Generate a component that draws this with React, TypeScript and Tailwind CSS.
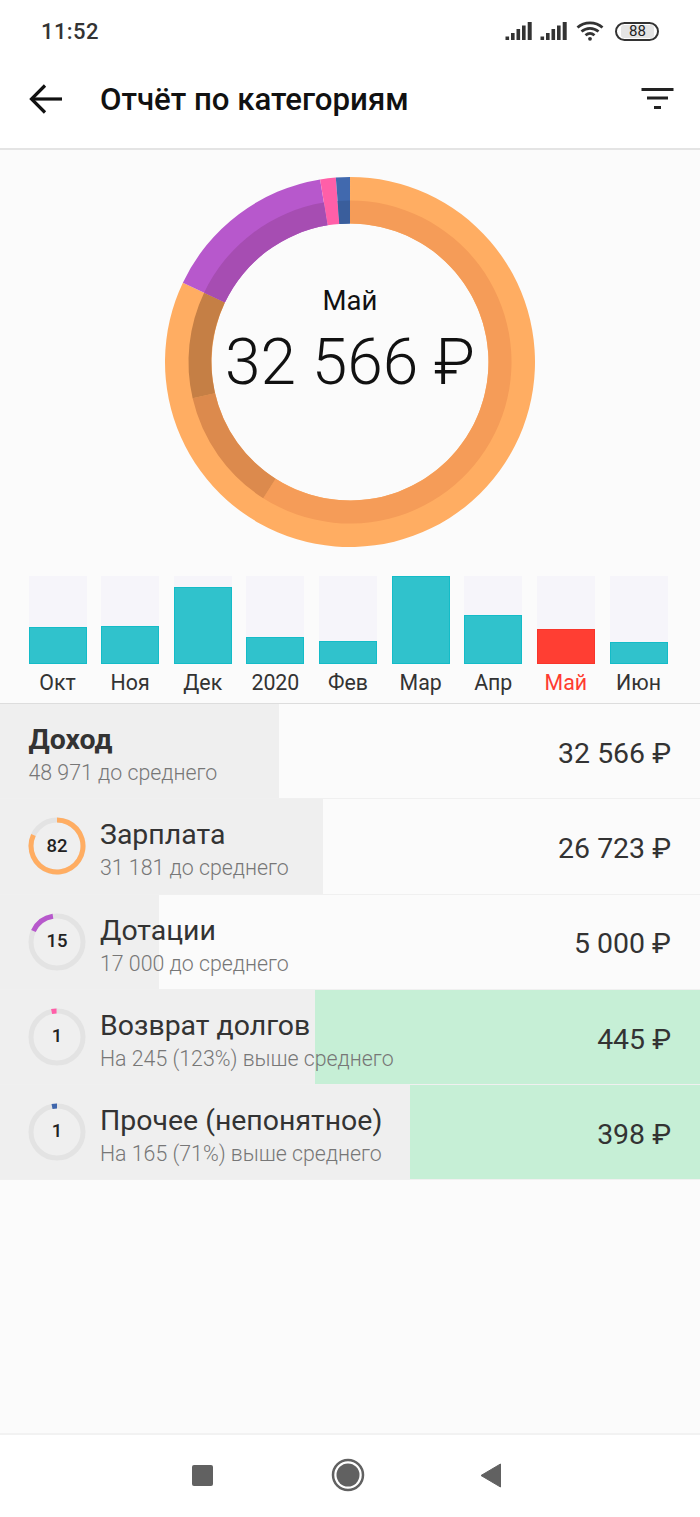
import React from "react";

function pt(cx: number, cy: number, r: number, a: number): [number, number] {
  const t = (a * Math.PI) / 180;
  return [cx + r * Math.sin(t), cy - r * Math.cos(t)];
}
function arc(cx: number, cy: number, r0: number, r1: number, a0: number, a1: number) {
  const large = a1 - a0 > 180 ? 1 : 0;
  const [x0, y0] = pt(cx, cy, r1, a0);
  const [x1, y1] = pt(cx, cy, r1, a1);
  const [x2, y2] = pt(cx, cy, r0, a1);
  const [x3, y3] = pt(cx, cy, r0, a0);
  return `M${x0} ${y0}A${r1} ${r1} 0 ${large} 1 ${x1} ${y1}L${x2} ${y2}A${r0} ${r0} 0 ${large} 0 ${x3} ${y3}Z`;
}

const months = [
  { l: "Окт", h: 37 },
  { l: "Ноя", h: 37.7 },
  { l: "Дек", h: 77 },
  { l: "2020", h: 26.7 },
  { l: "Фев", h: 23 },
  { l: "Мар", h: 87.2 },
  { l: "Апр", h: 48.7 },
  { l: "Май", h: 34.7, red: true },
  { l: "Июн", h: 21.7 },
];

const rows = [
  { title: "Зарплата", sub: "31 181 до среднего", amt: "26 723 ₽", w: 323, num: "82", arc: [[0, 295, "#FFAD62"]] },
  { title: "Дотации", sub: "17 000 до среднего", amt: "5 000 ₽", w: 159, num: "15", arc: [[295, 351, "#B758CC"]] },
  { title: "Возврат долгов", sub: "На 245 (123%) выше среднего", amt: "445 ₽", w: 315, green: true, num: "1", arc: [[348, 359, "#FF5FA8"]] },
  { title: "Прочее (непонятное)", sub: "На 165 (71%) выше среднего", amt: "398 ₽", w: 410, green: true, num: "1", arc: [[349, 360, "#3F66AC"]] },
] as { title: string; sub: string; amt: string; w: number; green?: boolean; num: string; arc: [number, number, string][] }[];

function Donut() {
  const c = 185;
  return (
    <svg width="370" height="370" viewBox="0 0 370 370" className="[grid-area:1/1]">
      <path d={arc(c, c, 138.5, 185, 0.01, 295.4)} fill="#FFAD62" />
      <path d={arc(c, c, 138.5, 185, 295.4, 350.7)} fill="#B758CC" />
      <path d={arc(c, c, 138.5, 185, 350.7, 355.6)} fill="#FF5FA8" />
      <path d={arc(c, c, 138.5, 185, 355.6, 360)} fill="#4169AE" />
      <path d={arc(c, c, 138.5, 161.5, 0.01, 212.5)} fill="#F59C58" />
      <path d={arc(c, c, 138.5, 161.5, 212.5, 257)} fill="#DC8A4D" />
      <path d={arc(c, c, 138.5, 161.5, 257, 295.4)} fill="#C57F45" />
      <path d={arc(c, c, 138.5, 161.5, 295.4, 350.7)} fill="#A64DB2" />
      <path d={arc(c, c, 138.5, 161.5, 355.6, 360)} fill="#3A5E9C" />
    </svg>
  );
}

function Ring({ num, arcs }: { num: string; arcs: [number, number, string][] }) {
  return (
    <div className="grid w-[58px] h-[58px] shrink-0 place-items-center">
      <svg width="58" height="58" viewBox="0 0 58 58" className="[grid-area:1/1]">
        <circle cx="29" cy="29" r="26" fill="none" stroke="#E3E3E3" strokeWidth="5" />
        {arcs.map(([a, b, col], i) => (
          <path key={i} d={arc(29, 29, 23.5, 28.5, a, b)} fill={col} />
        ))}
      </svg>
      <span className="[grid-area:1/1] text-[18.5px] font-medium text-[#222]">{num}</span>
    </div>
  );
}

function Signal() {
  return (
    <svg width="27" height="19" viewBox="0 0 27 19" fill="#333">
      <rect x="0.5" y="14.5" width="3.6" height="3.5" />
      <rect x="6" y="11" width="3.6" height="7" />
      <rect x="11.5" y="7" width="3.6" height="11" />
      <rect x="17" y="3.5" width="3.6" height="14.5" />
      <rect x="22.7" y="0" width="4" height="18" />
    </svg>
  );
}

export default function App() {
  return (
    <div
      className="w-[700px] h-[1517px] flex flex-col bg-[#FBFBFB] overflow-hidden"
      style={{ fontFamily: "Roboto, 'Noto Sans', sans-serif" }}
    >
      <header className="bg-white h-[150px] shrink-0 border-b-2 border-[#E4E4E4] flex flex-col">
        <div className="h-[62px] flex items-center pl-[41px] pr-[41px] text-[#333]">
          <span className="text-[22px] font-medium tracking-[0.4px]">11:52</span>
          <div className="ml-auto flex items-center">
            <Signal />
            <div className="ml-[8px]">
              <Signal />
            </div>
            <svg width="28" height="20" viewBox="0 0 28 20" fill="none" stroke="#333" strokeWidth="2.8" className="ml-[9px]">
              <path d="M1.5 6.5C8.5 .2 19.5 .2 26.5 6.5" />
              <path d="M5.5 10.5C10.5 6.2 17.5 6.2 22.5 10.5" />
              <path d="M9.5 14.3C12.2 12 15.8 12 18.5 14.3" />
              <circle cx="14" cy="17.8" r="1.9" fill="#333" stroke="none" />
            </svg>
            <div className="ml-[11px] w-[44px] h-[19px] rounded-full border-2 border-[#333] p-[1px] flex">
              <div className="ml-[3px] w-[33px] h-full rounded-[3px] bg-[#E4E4E4] flex items-center justify-center text-[15px] leading-none text-[#222]">
                88
              </div>
            </div>
          </div>
        </div>
        <div className="flex-1 flex items-center pl-[29px] pr-[26px] pb-[12px]">
          <svg width="34" height="30" viewBox="0 0 34 30" fill="none" stroke="#111" strokeWidth="3.2">
            <path d="M33 15H3" />
            <path d="M16 1.5L2.5 15L16 28.5" />
          </svg>
          <h1 className="ml-[37px] mt-[2px] text-[31.2px] font-medium text-[#111] leading-none">Отчёт по категориям</h1>
          <svg width="33" height="22" viewBox="0 0 33 22" fill="#222" className="ml-auto">
            <rect x="0.5" y="0" width="32" height="3" />
            <rect x="6" y="8.5" width="21" height="3" />
            <rect x="13" y="18" width="7" height="3" />
          </svg>
        </div>
      </header>

      <div className="mt-[27px] mx-auto w-[370px] h-[370px] grid shrink-0">
        <Donut />
        <div className="[grid-area:1/1] flex flex-col items-center text-[#111]">
          <span className="mt-[108px] text-[27.5px] leading-[32px]">Май</span>
          <span className="mt-[8px] text-[64px] leading-[76px] font-light">32 566 ₽</span>
        </div>
      </div>

      <div className="mt-[29px] pl-[28.5px] pr-[32.5px] flex justify-between shrink-0">
        {months.map((m) => (
          <div key={m.l} className="w-[58px] flex flex-col items-center">
            <div className="w-full h-[87.5px] bg-[#F6F5FA] flex flex-col justify-end">
              <div
                className={m.red ? "w-full bg-[#FF3E33] border border-[#F8352B]" : "w-full bg-[#30C2CC] border border-[#14BCC8]"}
                style={{ height: m.h }}
              />
            </div>
            <span className={`mt-[5px] text-[21.33px] leading-[28px] whitespace-nowrap ${m.red ? "text-[#FF3B30]" : "text-[#333]"}`}>{m.l}</span>
          </div>
        ))}
      </div>

      <div className="mt-[6.5px] border-t border-[#DDDDDD] flex-1 flex flex-col">
        <div className="relative h-[95.3px] border-b border-[#F0F0F0] flex items-center pt-[3px] pl-[28.5px] pr-[29px]">
          <div className="absolute left-0 top-0 bottom-0 bg-[#EFEFEF]" style={{ width: 279 }} />
          <div className="relative mt-[7px] flex flex-col">
            <span className="text-[28.44px] leading-[34px] font-bold text-[#333]">Доход</span>
            <span className="text-[21.33px] leading-[32px] font-light text-[#777]">48 971 до среднего</span>
          </div>
          <span className="relative mt-[3px] ml-auto text-[28.44px] text-[#333]">32 566 ₽</span>
        </div>
        {rows.map((r) => (
          <div
            key={r.title}
            className={`relative h-[95.3px] border-b border-[#F0F0F0] flex items-center pt-[3px] pl-[28px] pr-[29px] ${r.green ? "bg-[#C6EFD6]" : ""}`}
          >
            <div className="absolute left-0 top-0 bottom-0 bg-[#EFEFEF]" style={{ width: r.w }} />
            <div className="relative mb-[3px]">
              <Ring num={r.num} arcs={r.arc} />
            </div>
            <div className="relative mt-[7px] ml-[14px] flex flex-col whitespace-nowrap">
              <span className="text-[28.44px] leading-[34px] text-[#333]">{r.title}</span>
              <span className="text-[21.33px] leading-[32px] font-light text-[#777]">{r.sub}</span>
            </div>
            <span className="relative mt-[3px] ml-auto text-[28.44px] text-[#333]">{r.amt}</span>
          </div>
        ))}
      </div>

      <nav className="h-[84px] shrink-0 bg-white border-t-2 border-[#F2F2F2] flex items-center pl-[192px] pb-[2px]">
        <div className="w-[21px] h-[21px] rounded-[2px] bg-[#616161]" />
        <svg width="34" height="34" viewBox="0 0 34 34" className="ml-[118px]">
          <circle cx="17" cy="17" r="15" fill="none" stroke="#616161" strokeWidth="2.5" />
          <circle cx="17" cy="17" r="11.5" fill="#616161" />
        </svg>
        <svg width="22" height="25" viewBox="0 0 22 25" className="ml-[115px]">
          <path d="M20.5 1V24L1 12.5Z" fill="#616161" stroke="#616161" strokeLinejoin="round" />
        </svg>
      </nav>
    </div>
  );
}
